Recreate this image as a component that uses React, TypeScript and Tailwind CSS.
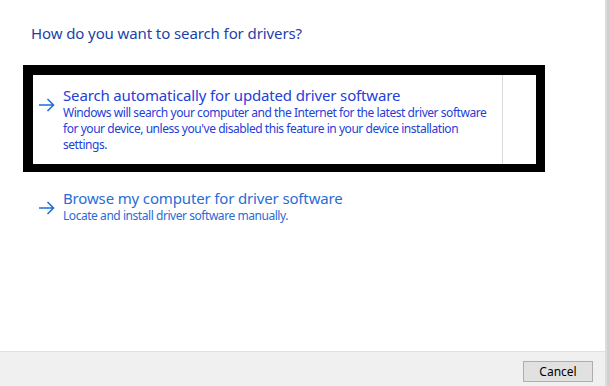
import React from "react";

const Arrow = () => (
  <svg width="17" height="14" viewBox="0 0 17 14" fill="none" className="shrink-0">
    <path d="M1 7H15.5M9.5 1L15.5 7L9.5 13" stroke="#1f6fd9" strokeWidth="1.6" />
  </svg>
);

export default function App() {
  const font = { fontFamily: '"Segoe UI", "Noto Sans", "Open Sans", sans-serif' };
  return (
    <div className="w-[610px] h-[386px] flex bg-white overflow-hidden" style={font}>
      <div className="w-[605px] h-full flex flex-col">
        <div className="flex-1 flex flex-col">
          <div className="pl-[31px] pt-[23px] text-[15px] leading-[20px] tracking-[-0.1px] text-[#1e3fa8]">
            How do you want to search for drivers?
          </div>
          <div className="ml-[23px] mt-[22px] w-[522px] h-[107px] border-l-[10px] border-t-[10px] border-r-[9px] border-b-[8px] border-black flex">
            <div className="w-[469px] flex items-start pl-[5px] pt-[10px]">
              <div className="mt-[13px]"><Arrow /></div>
              <div className="ml-[8px] w-[436px] flex flex-col">
                <div className="text-[15px] leading-[20px] tracking-[-0.15px] text-[#2440d8]">
                  Search automatically for updated driver software
                </div>
                <div className="text-[12px] leading-[16px] tracking-[-0.45px] text-[#2440d8]">
                  Windows will search your computer and the Internet for the latest driver software for your device, unless you've disabled this feature in your device installation settings.
                </div>
              </div>
            </div>
            <div className="w-px h-full bg-[#d9d9d9]" />
          </div>
          <div className="ml-[38px] mt-[16px] flex items-start">
            <div className="mt-[13px]"><Arrow /></div>
            <div className="ml-[8px] flex flex-col">
              <div className="text-[15px] leading-[20px] tracking-[-0.15px] text-[#2a6cd6]">
                Browse my computer for driver software
              </div>
              <div className="text-[12px] leading-[16px] tracking-[-0.45px] text-[#2a6cd6]">
                Locate and install driver software manually.
              </div>
            </div>
          </div>
        </div>
        <div className="h-[35px] border-t border-[#dfdfdf] bg-[#f0f0f0] flex justify-end items-start pt-[9px] pr-[12px]">
          <button className="w-[70px] h-[21px] border border-[#adadad] bg-[#e1e1e1] text-[12px] leading-[19px] text-black">
            Cancel
          </button>
        </div>
      </div>
      <div className="w-[5px] h-full flex">
        <div className="w-[2px] bg-[#dcdcdc]" />
        <div className="w-[3px] bg-[#d0d0d0]" />
      </div>
    </div>
  );
}
